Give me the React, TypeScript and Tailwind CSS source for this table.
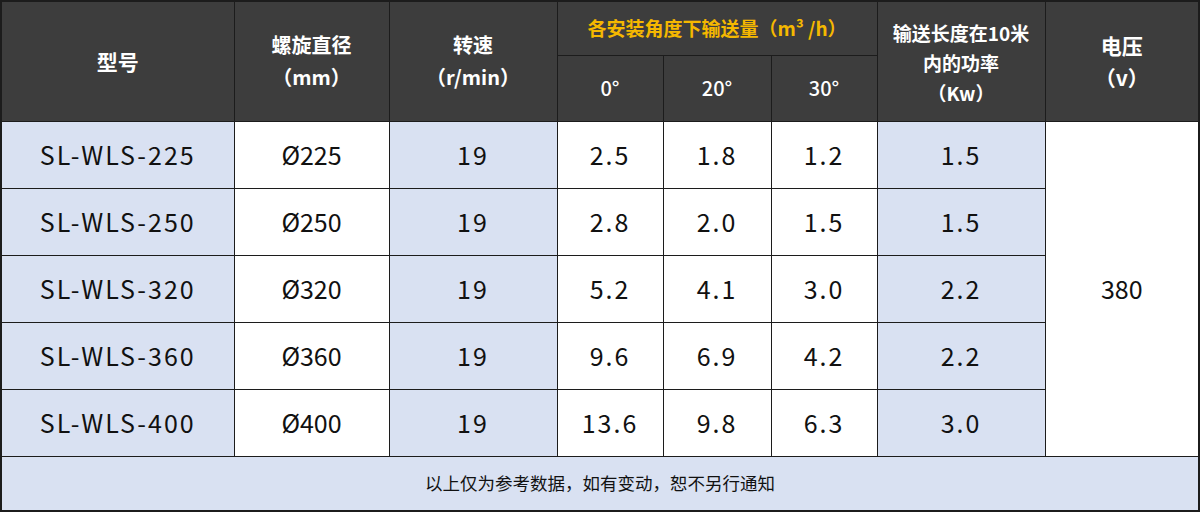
import React from 'react';

const rows = [
  { model: 'SL-WLS-225', dia: 'Ø225', speed: '19', a0: '2.5', a20: '1.8', a30: '1.2', kw: '1.5' },
  { model: 'SL-WLS-250', dia: 'Ø250', speed: '19', a0: '2.8', a20: '2.0', a30: '1.5', kw: '1.5' },
  { model: 'SL-WLS-320', dia: 'Ø320', speed: '19', a0: '5.2', a20: '4.1', a30: '3.0', kw: '2.2' },
  { model: 'SL-WLS-360', dia: 'Ø360', speed: '19', a0: '9.6', a20: '6.9', a30: '4.2', kw: '2.2' },
  { model: 'SL-WLS-400', dia: 'Ø400', speed: '19', a0: '13.6', a20: '9.8', a30: '6.3', kw: '3.0' },
];

const font = { fontFamily: '"Noto Sans CJK SC", "Noto Sans", sans-serif' };

export default function App() {
  const th = 'border border-[#1c1c1c] bg-[#3d3d3d] font-bold text-center align-middle';
  const td = 'border border-[#1c1c1c] text-center align-middle text-[25px] text-[#111] tracking-[2px]';
  const blue = 'bg-[#d9e1f2]';

  return (
    <div className="w-[1200px] h-[513px] bg-white" style={font}>
      <table className="table-fixed border-collapse border-2 border-[#1c1c1c] w-[1198px]">
        <colgroup>
          <col className="w-[233px]" />
          <col className="w-[155px]" />
          <col className="w-[168px]" />
          <col className="w-[106px]" />
          <col className="w-[108px]" />
          <col className="w-[106px]" />
          <col className="w-[168px]" />
          <col className="w-[154px]" />
        </colgroup>
        <thead>
          <tr className="h-[54px]">
            <th rowSpan={2} className={`${th} text-white text-[21px]`}>型号</th>
            <th rowSpan={2} className={`${th} text-white text-[20px] leading-[32px]`}>
              螺旋直径<br />（mm）
            </th>
            <th rowSpan={2} className={`${th} text-white text-[20px] leading-[32px]`}>
              转速<br />（r/min）
            </th>
            <th colSpan={3} className={`${th} text-[#f5b800] text-[19px]`}>
              各安装角度下输送量（m³ /h）
            </th>
            <th rowSpan={2} className={`${th} text-white text-[19px] leading-[30px] pt-1`}>
              输送长度在10米<br />内的功率<br />（Kw）
            </th>
            <th rowSpan={2} className={`${th} text-white text-[21px] leading-[32px]`}>
              电压<br />（v）
            </th>
          </tr>
          <tr className="h-[66px]">
            <th className={`${th} text-white text-[20px] font-medium`}>0°</th>
            <th className={`${th} text-white text-[20px] font-medium`}>20°</th>
            <th className={`${th} text-white text-[20px] font-medium`}>30°</th>
          </tr>
        </thead>
        <tbody>
          {rows.map((r, i) => (
            <tr key={r.model} className="h-[67px]">
              <td className={`${td} ${blue}`}>{r.model}</td>
              <td className={`${td} tracking-normal text-[23px]`}>{r.dia}</td>
              <td className={`${td} ${blue}`}>{r.speed}</td>
              <td className={td}>{r.a0}</td>
              <td className={td}>{r.a20}</td>
              <td className={td}>{r.a30}</td>
              <td className={`${td} ${blue}`}>{r.kw}</td>
              {i === 0 && (
                <td rowSpan={5} className={`${td} tracking-normal`}>380</td>
              )}
            </tr>
          ))}
          <tr className="h-[55px]">
            <td colSpan={8} className={`border border-[#1c1c1c] ${blue} text-center text-[17.5px] text-[#111]`}>
              以上仅为参考数据，如有变动，恕不另行通知
            </td>
          </tr>
        </tbody>
      </table>
    </div>
  );
}
